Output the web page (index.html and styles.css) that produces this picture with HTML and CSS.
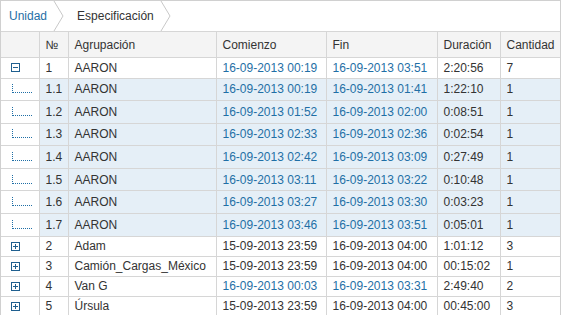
FILE: index.html
```html
<!DOCTYPE html>
<html lang="es">
<head>
<meta charset="utf-8">
<link rel="stylesheet" href="styles.css">
</head>
<body>
<div class="widget">
  <div class="crumbs">
    <a class="crumb link">Unidad</a>
    <svg class="sep" width="12" height="30" viewBox="0 0 12 30"><polyline points="1,0 10,15 1,30" fill="none" stroke="#c8c8c8" stroke-width="1"/></svg>
    <span class="crumb">Especificación</span>
    <svg class="sep" width="12" height="30" viewBox="0 0 12 30"><polyline points="1,0 10,15 1,30" fill="none" stroke="#c8c8c8" stroke-width="1"/></svg>
  </div>
  <table class="grid">
    <colgroup>
      <col class="c-exp"><col class="c-num"><col class="c-grp"><col class="c-date"><col class="c-date2"><col class="c-dur"><col class="c-cnt">
    </colgroup>
    <thead>
      <tr><th></th><th>№</th><th>Agrupación</th><th>Comienzo</th><th>Fin</th><th>Duración</th><th>Cantidad</th></tr>
    </thead>
    <tbody>
      <tr class="parent"><td class="exp"><span class="box minus"></span></td><td>1</td><td>AARON</td><td class="link">16-09-2013 00:19</td><td class="link">16-09-2013 03:51</td><td>2:20:56</td><td>7</td></tr>
      <tr class="child"><td class="exp"><span class="tree"></span></td><td>1.1</td><td>AARON</td><td class="link">16-09-2013 00:19</td><td class="link">16-09-2013 01:41</td><td>1:22:10</td><td>1</td></tr>
      <tr class="child"><td class="exp"><span class="tree"></span></td><td>1.2</td><td>AARON</td><td class="link">16-09-2013 01:52</td><td class="link">16-09-2013 02:00</td><td>0:08:51</td><td>1</td></tr>
      <tr class="child"><td class="exp"><span class="tree"></span></td><td>1.3</td><td>AARON</td><td class="link">16-09-2013 02:33</td><td class="link">16-09-2013 02:36</td><td>0:02:54</td><td>1</td></tr>
      <tr class="child"><td class="exp"><span class="tree"></span></td><td>1.4</td><td>AARON</td><td class="link">16-09-2013 02:42</td><td class="link">16-09-2013 03:09</td><td>0:27:49</td><td>1</td></tr>
      <tr class="child"><td class="exp"><span class="tree"></span></td><td>1.5</td><td>AARON</td><td class="link">16-09-2013 03:11</td><td class="link">16-09-2013 03:22</td><td>0:10:48</td><td>1</td></tr>
      <tr class="child"><td class="exp"><span class="tree"></span></td><td>1.6</td><td>AARON</td><td class="link">16-09-2013 03:27</td><td class="link">16-09-2013 03:30</td><td>0:03:23</td><td>1</td></tr>
      <tr class="child"><td class="exp"><span class="tree"></span></td><td>1.7</td><td>AARON</td><td class="link">16-09-2013 03:46</td><td class="link">16-09-2013 03:51</td><td>0:05:01</td><td>1</td></tr>
      <tr class="parent"><td class="exp"><span class="box plus"></span></td><td>2</td><td>Adam</td><td>15-09-2013 23:59</td><td>16-09-2013 04:00</td><td>1:01:12</td><td>3</td></tr>
      <tr class="parent"><td class="exp"><span class="box plus"></span></td><td>3</td><td>Camión_Cargas_México</td><td>15-09-2013 23:59</td><td>16-09-2013 04:00</td><td>00:15:02</td><td>1</td></tr>
      <tr class="parent"><td class="exp"><span class="box plus"></span></td><td>4</td><td>Van G</td><td class="link">16-09-2013 00:03</td><td class="link">16-09-2013 03:31</td><td>2:49:40</td><td>2</td></tr>
      <tr class="parent"><td class="exp"><span class="box plus"></span></td><td>5</td><td>Úrsula</td><td>15-09-2013 23:59</td><td>16-09-2013 04:00</td><td>00:45:00</td><td>3</td></tr>
    </tbody>
  </table>
</div>
</body>
</html>
```

FILE: styles.css
```css
html, body {
  margin: 0;
  padding: 0;
  background: #ffffff;
}
body {
  font-family: "Liberation Sans", Arial, sans-serif;
  font-size: 12px;
  color: #333333;
}
.widget {
  width: 559px;
  border: 1px solid #d0d0d0;
  border-bottom: none;
  background: #ffffff;
}
.crumbs {
  display: flex;
  align-items: center;
  height: 30px;
  padding-left: 8px;
}
.crumb {
  font-size: 12px;
  color: #333333;
}
.link {
  color: #1f6fa6;
}
.sep {
  display: block;
  margin: 0 12px 0 6px;
}
.grid {
  border-collapse: collapse;
  table-layout: fixed;
  width: 559px;
}
.c-exp { width: 38px; }
.c-num { width: 29px; }
.c-grp { width: 148px; }
.c-date { width: 110px; }
.c-date2 { width: 111px; }
.c-dur { width: 63px; }
.c-cnt { width: 60px; }
.grid th, .grid td {
  border: 1px solid #d6d6d6;
  padding: 0 0 0 6px;
  text-align: left;
  white-space: nowrap;
  overflow: hidden;
  line-height: 14px;
}
.grid tr > :first-child { border-left: none; }
.grid tr > :last-child { border-right: none; }
.grid th {
  background: #f4f4f4;
  font-weight: normal;
  height: 25px;
  font-size: 12px;
}
.parent td { height: 19px; }
.child td { height: 21.6px; background: #e5eff7; }
.child td.exp { background: #ffffff; }
.grid tbody tr:first-child td { height: 19.5px; }
.grid td.exp {
  padding: 0 0 0 10px;
}
.box {
  display: block;
  width: 7px;
  height: 7px;
  border: 1px solid #1f5f8f;
  position: relative;
}
.box::before {
  content: "";
  position: absolute;
  left: 1px;
  top: 3px;
  width: 5px;
  height: 1px;
  background: #1f5f8f;
}
.box.plus::after {
  content: "";
  position: absolute;
  left: 3px;
  top: 1px;
  width: 1px;
  height: 5px;
  background: #1f5f8f;
}
.tree {
  display: block;
  position: relative;
  width: 22px;
  height: 20px;
}
.tree::before {
  content: "";
  position: absolute;
  left: 1px;
  top: 5px;
  height: 9px;
  border-left: 1px dotted #1f6fa6;
}
.tree::after {
  content: "";
  position: absolute;
  left: 2px;
  top: 13px;
  width: 19px;
  border-top: 1px dotted #1f6fa6;
}
```
